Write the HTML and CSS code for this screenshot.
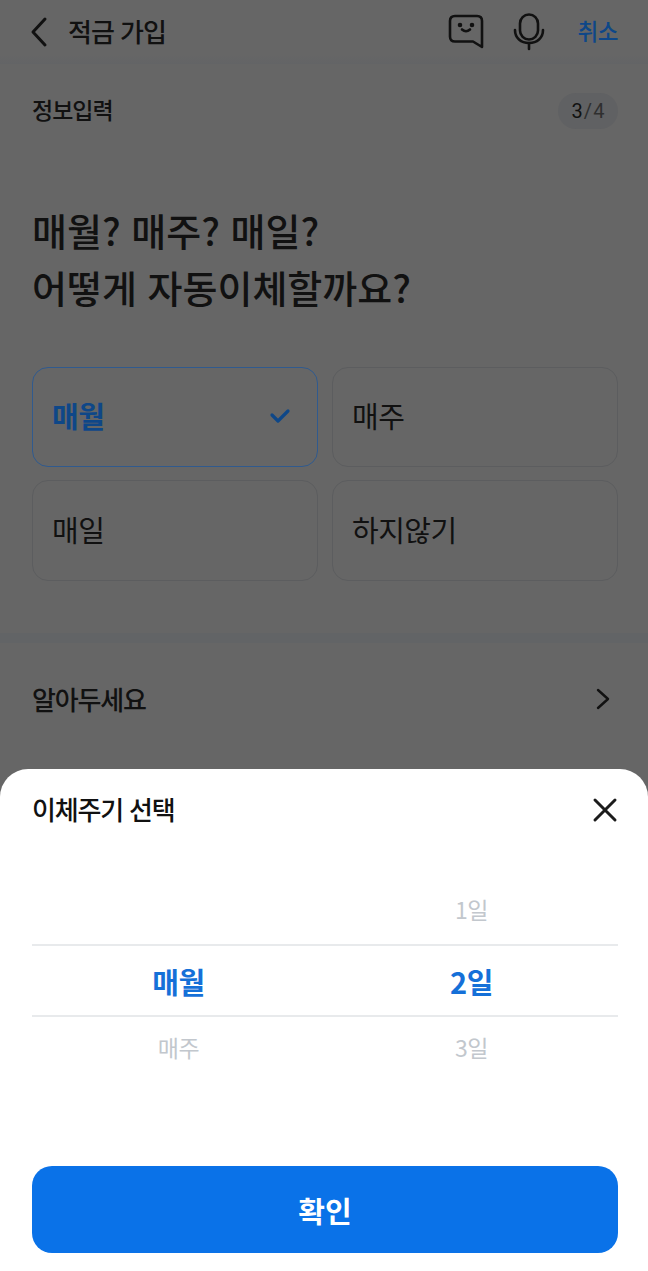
FILE: index.html
```html
<!DOCTYPE html>
<html lang="ko">
<head>
  <meta charset="UTF-8" />
  <meta name="viewport" content="width=device-width, initial-scale=1.0" />
  <title>적금 가입</title>
  <link rel="stylesheet" href="styles.css">
</head>
<body>
  <div class="page">
    <header class="topbar">
      <svg class="back" width="20" height="32" viewBox="0 0 20 32" fill="none" stroke="#111" stroke-width="3" stroke-linecap="round" stroke-linejoin="round"><path d="M15 3 L3 16 L15 29"/></svg>
      <h1 class="topbar-title">적금 가입</h1>
      <svg class="chat" width="36" height="36" viewBox="0 0 36 36" fill="none" stroke="#111" stroke-width="2.6" stroke-linecap="round" stroke-linejoin="round"><path d="M7 2 H29 Q34 2 34 7 V33 L25 27.5 H7 Q2 27.5 2 22.5 V7 Q2 2 7 2 Z"/><path d="M14 15.5 Q18 19 22 15.5"/><circle cx="12" cy="11" r="1" fill="#111"/><circle cx="24" cy="11" r="1" fill="#111"/></svg>
      <svg class="mic" width="32" height="38" viewBox="0 0 32 38" fill="none" stroke="#111" stroke-width="2.6" stroke-linecap="round"><rect x="7" y="1.500" width="18" height="25" rx="9"/><path d="M2 17 C2 25 8 30 16 30 C24 30 30 25 30 17"/><path d="M16 30 V36"/></svg>
      <span class="cancel">취소</span>
    </header>

    <div class="progress">
      <span class="progress-label">정보입력</span>
      <span class="step"><b>3</b>/<i>4</i></span>
    </div>

    <h2 class="question">매월? 매주? 매일?<br>어떻게 자동이체할까요?</h2>

    <div class="options">
      <div class="option selected">
        <span>매월</span>
        <svg width="22" height="16" viewBox="0 0 22 16" fill="none" stroke="#0e4788" stroke-width="3.2" stroke-linecap="round" stroke-linejoin="round"><path d="M3 7 L9 13 L19 3"/></svg>
      </div>
      <div class="option"><span>매주</span></div>
      <div class="option"><span>매일</span></div>
      <div class="option"><span>하지않기</span></div>
    </div>

    <div class="section-line"></div>

    <div class="notice">
      <span>알아두세요</span>
      <svg width="14" height="22" viewBox="0 0 14 22" fill="none" stroke="#111" stroke-width="2.4" stroke-linecap="round" stroke-linejoin="round"><path d="M2 2 L12 11 L2 20"/></svg>
    </div>
  </div>

  <section class="sheet">
    <div class="sheet-head">
      <h3>이체주기 선택</h3>
      <svg width="26" height="26" viewBox="0 0 26 26" fill="none" stroke="#1c1c1c" stroke-width="3" stroke-linecap="round"><path d="M3 3 L23 23 M23 3 L3 23"/></svg>
    </div>

    <div class="picker">
      <div class="picker-row"><span></span><span>1일</span></div>
      <div class="picker-row current"><span>매월</span><span>2일</span></div>
      <div class="picker-row"><span>매주</span><span>3일</span></div>
    </div>

    <button class="confirm" type="button">확인</button>
  </section>
</body>
</html>
```

FILE: styles.css
```css
* {
  box-sizing: border-box;
}

html,
body {
  margin: 0;
  height: 1271px;
  overflow: hidden;
}

/* the page behind the sheet is dimmed, colors below are the dimmed ones */
body {
  position: relative;
  width: 648px;
  background: #666;
  color: #111;
  font-family: "Noto Sans CJK KR", "Noto Sans", sans-serif;
}

.page {
  height: 100%;
}

.topbar {
  display: flex;
  align-items: center;
  height: 64px;
  padding: 0 30px;
  background: linear-gradient(#666 85%, #636466);
}

.topbar-title {
  flex: 1;
  margin: 0 0 4px 18px;
  font-size: 26px;
  font-weight: 500;
  letter-spacing: -1px;
}

.chat {
  margin-right: 29px;
}

.mic {
  margin-right: 33px;
}

.cancel {
  margin-bottom: 4px;
  color: #0e4788;
  font-size: 22.5px;
  font-weight: 500;
  letter-spacing: -0.5px;
}

.progress {
  display: flex;
  justify-content: space-between;
  align-items: center;
  height: 62px;
  margin-top: 16px;
  padding: 0 30px 0 32px;
}

.progress-label {
  margin-bottom: 4px;
  font-size: 23px;
  font-weight: 500;
  letter-spacing: -1px;
}

.step {
  display: flex;
  align-items: center;
  justify-content: center;
  gap: 1px;
  width: 60px;
  height: 36px;
  border-radius: 18px;
  background: #606163;
  color: #2f2f2f;
  font-size: 20px;
  font-family: "Roboto", sans-serif;
}

.step b {
  color: #111;
  font-weight: 400;
}

.step i {
  color: #2f2f2f;
  font-style: normal;
}

.question {
  margin: 59px 32px 0;
  font-size: 38px;
  font-weight: 500;
  line-height: 57px;
}

.options {
  display: grid;
  grid-template-columns: 286px 286px;
  grid-template-rows: 100px 101px;
  gap: 13px 14px;
  margin: 52px 30px 0 32px;
}

.option {
  display: flex;
  align-items: center;
  justify-content: space-between;
  padding: 0 26px 0 19px;
  border: 1.5px solid #5c5d5f;
  border-radius: 16px;
  font-size: 29px;
  letter-spacing: -0.5px;
}

.option span {
  margin-bottom: 4px;
}

.option svg {
  margin-bottom: 2px;
}

.option.selected {
  border-color: #305a8e;
  color: #0e4788;
  font-weight: 700;
}

.section-line {
  height: 10px;
  margin-top: 52px;
  background: #626466;
}

.notice {
  display: flex;
  justify-content: space-between;
  align-items: center;
  margin-top: 37px;
  padding: 0 38px 0 32px;
  font-size: 26px;
  font-weight: 500;
  letter-spacing: -1.2px;
}

.sheet {
  position: absolute;
  left: 0;
  right: 0;
  bottom: 0;
  height: 502px;
  padding: 0 30px 18px 32px;
  display: flex;
  flex-direction: column;
  background: #fff;
  border-radius: 28px 28px 0 0;
}

.sheet-head {
  display: flex;
  justify-content: space-between;
  align-items: center;
  height: 82px;
}

.sheet-head h3 {
  margin: 0 0 4px;
  font-size: 26px;
  font-weight: 500;
  letter-spacing: -1.2px;
}

.picker {
  margin-top: 22px;
  flex: 1;
}

.picker-row {
  display: grid;
  grid-template-columns: 1fr 1fr;
  align-items: center;
  height: 60px;
  text-align: center;
  color: #c2c7cd;
  font-size: 23px;
  letter-spacing: -0.5px;
}

.picker-row:first-child {
  height: 71px;
}

.picker-row.current {
  height: 73px;
  border-top: 2px solid #e8eaec;
  border-bottom: 2px solid #e8eaec;
  color: #1570d8;
  font-size: 29px;
  font-weight: 700;
}

.confirm {
  height: 87px;
  border: none;
  border-radius: 20px;
  background: #0a72e8;
  color: #fff;
  font-family: inherit;
  font-size: 29px;
  font-weight: 700;
}
```
